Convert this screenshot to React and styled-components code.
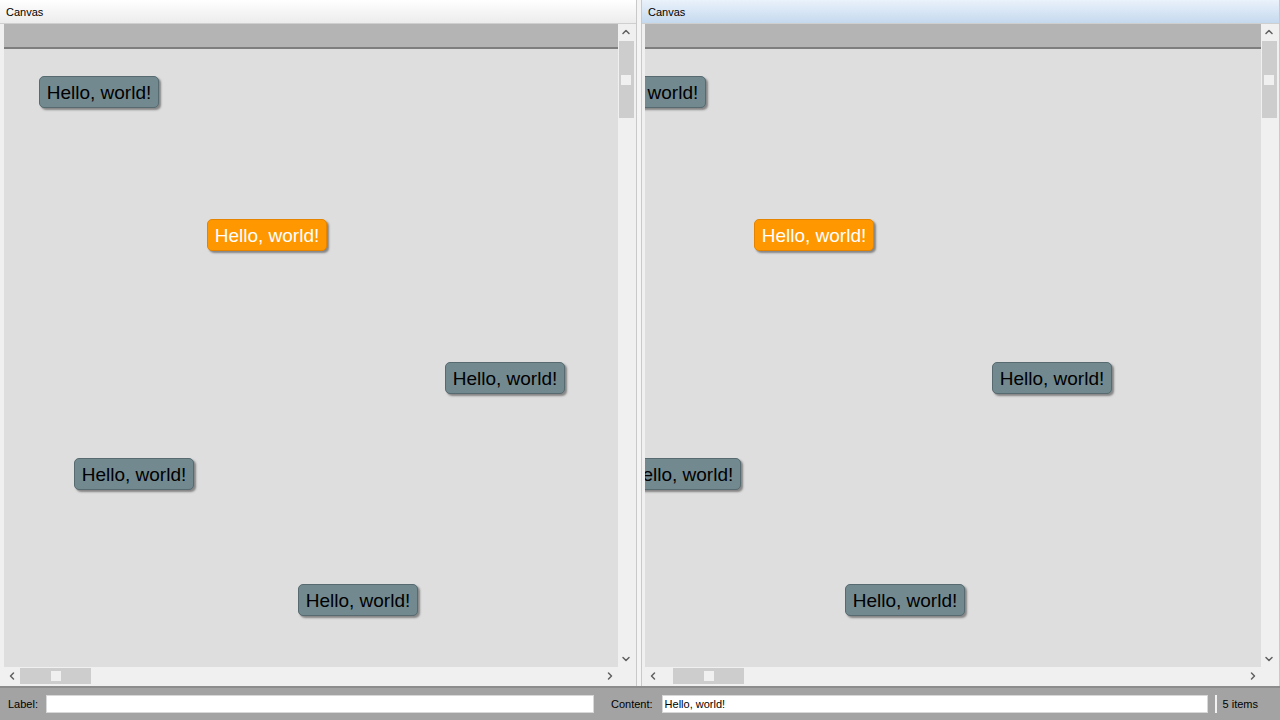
import styled, { createGlobalStyle } from "styled-components";
import { ChevronUp, ChevronDown, ChevronLeft, ChevronRight } from "lucide-react";

const Global = createGlobalStyle`
  html, body { margin: 0; padding: 0; }
  body {
    width: 1280px;
    height: 720px;
    overflow: hidden;
    font-family: "Liberation Sans", "DejaVu Sans", sans-serif;
    background: #f0f0f0;
  }
`;

const Page = styled.div`
  display: flex;
  flex-direction: column;
  width: 1280px;
  height: 720px;
`;

const PaneRow = styled.div`
  display: flex;
  height: 686px;
  background: #f0f0f0;
`;

const Pane = styled.div`
  display: flex;
  flex-direction: column;
  width: ${(p) => p.$width};
  flex: ${(p) => (p.$grow ? 1 : "none")};
  min-width: 0;
  border-right: 1px solid #c9c9c9;
  box-sizing: border-box;
`;

const Splitter = styled.div`
  width: 4px;
  background: #f4f4f4;
  border-right: 1px solid #c9c9c9;
`;

const TitleBar = styled.div`
  height: 24px;
  box-sizing: border-box;
  padding: 6px 0 0 6px;
  font-size: 11px;
  color: #000;
  border-bottom: 1px solid #cfcfcf;
  background: ${(p) =>
    p.$active
      ? "linear-gradient(#eaf2fb, #c5d9ee)"
      : "linear-gradient(#ffffff, #ececec)"};
`;

const Body = styled.div`
  flex: 1;
  display: grid;
  grid-template-columns: minmax(0, 1fr) 16px;
  grid-template-rows: minmax(0, 1fr) 17px;
  padding: 0 2px 2px ${(p) => p.$padLeft}px;
  min-height: 0;
`;

const View = styled.div`
  grid-column: 1;
  grid-row: 1;
  display: flex;
  flex-direction: column;
  min-height: 0;
  overflow: hidden;
`;

const HeaderBar = styled.div`
  height: 23px;
  flex: none;
  background: #b4b4b4;
  border-bottom: 2px solid #7e7e7e;
`;

const Canvas = styled.div`
  position: relative;
  flex: 1;
  background: #dedede;
  overflow: hidden;
`;

const Node = styled.div`
  position: absolute;
  width: 120px;
  height: 32px;
  box-sizing: border-box;
  border-radius: 5px;
  border: 1px solid ${(p) => (p.$selected ? "#e58400" : "#566a70")};
  background: ${(p) => (p.$selected ? "#ff9800" : "#728990")};
  color: ${(p) => (p.$selected ? "#ffffff" : "#000000")};
  box-shadow: 2px 2px 2px rgba(60, 60, 60, 0.55);
  font-family: "Liberation Sans", sans-serif;
  font-size: 19px;
  line-height: 31px;
  text-align: center;
  white-space: nowrap;
`;

const VScroll = styled.div`
  grid-column: 2;
  grid-row: 1;
  display: flex;
  flex-direction: column;
  align-items: center;
  background: #f0f0f0;
`;

const HScroll = styled.div`
  grid-column: 1;
  grid-row: 2;
  display: flex;
  align-items: center;
  background: #f0f0f0;
`;

const Corner = styled.div`
  grid-column: 2;
  grid-row: 2;
  background: #f0f0f0;
`;

const Arrow = styled.div`
  display: flex;
  align-items: center;
  justify-content: center;
  flex: none;
  width: 16px;
  height: 16px;
  color: #606060;
`;

const Track = styled.div`
  flex: 1;
  align-self: stretch;
  display: flex;
  flex-direction: ${(p) => (p.$vertical ? "column" : "row")};
  align-items: center;
`;

const Thumb = styled.div`
  display: flex;
  align-items: center;
  justify-content: center;
  background: #cdcdcd;
  width: ${(p) => (p.$vertical ? "15px" : "71px")};
  height: ${(p) => (p.$vertical ? "77px" : "16px")};
  margin: ${(p) => (p.$vertical ? "1px 0 0 0" : `0 0 0 ${p.$offset}px`)};
`;

const Grip = styled.div`
  width: 10px;
  height: 10px;
  background: #f0f0f0;
`;

const StatusBar = styled.div`
  height: 34px;
  box-sizing: border-box;
  display: flex;
  align-items: center;
  background: #a3a3a3;
  border-top: 2px solid #8c8c8c;
  font-size: 11px;
  color: #000;
  padding-left: 8px;
`;

const FieldLabel = styled.span`
  margin-right: ${(p) => p.$gap}px;
`;

const Field = styled.div`
  width: ${(p) => p.$width}px;
  height: 18px;
  box-sizing: border-box;
  background: #fff;
  border: 1px solid #d8d8d8;
  padding: 1px 0 0 2px;
  margin-right: ${(p) => p.$after}px;
  font-size: 11px;
  line-height: 15px;
`;

const Divider = styled.div`
  width: 2px;
  height: 18px;
  background: #f2f2f2;
  margin-right: 6px;
`;

const nodes = [
  { x: 35, y: 27 },
  { x: 203, y: 170, selected: true },
  { x: 441, y: 313 },
  { x: 70, y: 409 },
  { x: 294, y: 535 },
];

function CanvasPane({ width, grow, active, scroll, padLeft, thumbOffset }) {
  return (
    <Pane $width={width} $grow={grow}>
      <TitleBar $active={active}>Canvas</TitleBar>
      <Body $padLeft={padLeft}>
        <View>
          <HeaderBar />
          <Canvas>
            {nodes.map((n, i) => (
              <Node
                key={i}
                $selected={n.selected}
                style={{ left: n.x - scroll, top: n.y }}
              >
                Hello, world!
              </Node>
            ))}
          </Canvas>
        </View>
        <VScroll>
          <Arrow>
            <ChevronUp size={12} strokeWidth={3} />
          </Arrow>
          <Track $vertical>
            <Thumb $vertical>
              <Grip />
            </Thumb>
          </Track>
          <Arrow>
            <ChevronDown size={12} strokeWidth={3} />
          </Arrow>
        </VScroll>
        <HScroll>
          <Arrow>
            <ChevronLeft size={12} strokeWidth={3} />
          </Arrow>
          <Track>
            <Thumb $offset={thumbOffset}>
              <Grip />
            </Thumb>
          </Track>
          <Arrow>
            <ChevronRight size={12} strokeWidth={3} />
          </Arrow>
        </HScroll>
        <Corner />
      </Body>
    </Pane>
  );
}

export default function App() {
  return (
    <Page>
      <Global />
      <PaneRow>
        <CanvasPane width="637px" scroll={0} padLeft={4} thumbOffset={0} />
        <Splitter />
        <CanvasPane grow active scroll={94} padLeft={3} thumbOffset={12} />
      </PaneRow>
      <StatusBar>
        <FieldLabel $gap={8}>Label:</FieldLabel>
        <Field $width={548} $after={17} />
        <FieldLabel $gap={9}>Content:</FieldLabel>
        <Field $width={546} $after={7}>Hello, world!</Field>
        <Divider />
        <span>5 items</span>
      </StatusBar>
    </Page>
  );
}
